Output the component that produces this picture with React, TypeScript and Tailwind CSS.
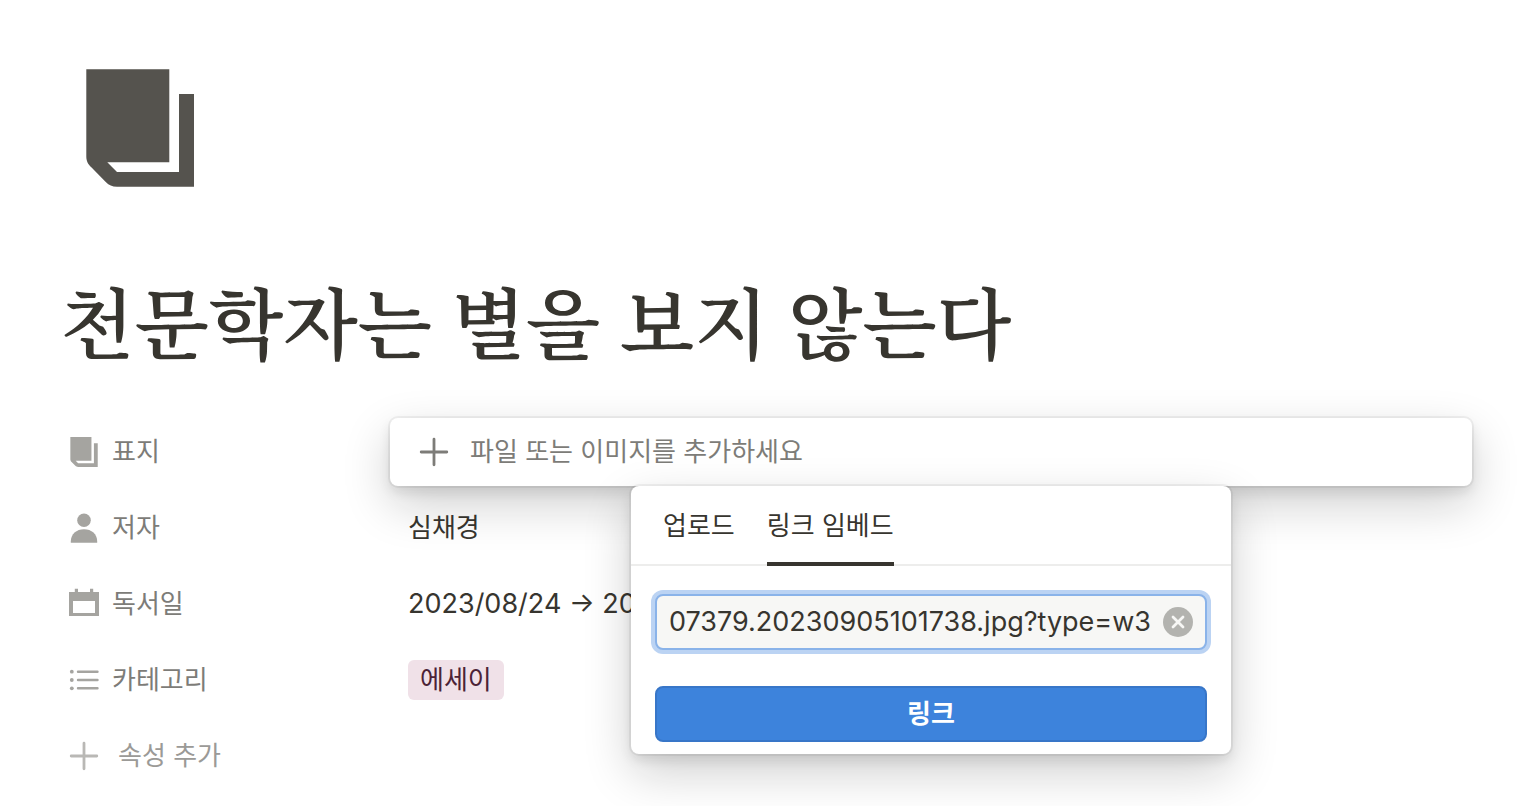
import { useState } from "react";
import type { ReactNode } from "react";

type IconProps = { className?: string };

const BookIcon = ({ className }: IconProps) => (
    <svg viewBox="18 13 108 118" fill="currentColor" className={className} aria-hidden="true">
        <path d="M18.300 13.300H101.300V106.300H39.300L49 116H111V38H126V130.700H49C44 130.700 41 129.300 38 126.300L23.300 111.300C20.300 108.300 18.300 105.500 18.300 100.500Z" />
    </svg>
);

const PersonIcon = ({ className }: IconProps) => (
    <svg viewBox="0 0 32 32" fill="currentColor" className={className} aria-hidden="true">
        <circle cx="16" cy="8.200" r="6.800" />
        <path d="M2.800 30.800V29.500C2.800 22 8.500 17.200 16 17.200S29.200 22 29.200 29.500V30.800Z" />
    </svg>
);

const CalendarIcon = ({ className }: IconProps) => (
    <svg viewBox="0 0 32 32" fill="currentColor" className={className} aria-hidden="true">
        <path d="M6.800 .8H10V4H22V.8H25.200V4H31V28H1V4H6.800ZM5 13V25H27V13Z" fillRule="evenodd" />
    </svg>
);

const ListIcon = ({ className }: IconProps) => (
    <svg viewBox="0 0 32 32" fill="currentColor" className={className} aria-hidden="true">
        <circle cx="3.800" cy="7.700" r="1.900" />
        <circle cx="3.800" cy="16" r="1.900" />
        <circle cx="3.800" cy="24.300" r="1.900" />
        <path d="M10 7.700H29.500M10 16H29.500M10 24.300H29.500" stroke="currentColor" strokeWidth="2.400" strokeLinecap="round" />
    </svg>
);

const PlusIcon = ({ className }: IconProps) => (
    <svg viewBox="0 0 32 32" fill="none" className={className} aria-hidden="true">
        <path d="M16 3.200V28.800M3.200 16H28.800" stroke="currentColor" strokeWidth="2.800" strokeLinecap="round" />
    </svg>
);

const ClearIcon = ({ className }: IconProps) => (
    <svg viewBox="0 0 30 30" className={className} aria-hidden="true">
        <circle cx="15" cy="15" r="15" fill="#b3b3af" />
        <path d="M10 10L20 20M20 10L10 20" stroke="#f7f7f5" strokeWidth="2.800" strokeLinecap="round" />
    </svg>
);

type PropertyProps = {
    icon: ReactNode;
    label: string;
    children: ReactNode;
};

function Property({ icon, label, children }: PropertyProps) {
    return (
        <div className="flex min-h-[68px]">
            <div className="flex w-[322px] shrink-0 items-center gap-3 text-[#7d7c78]">
                <span className="flex size-8 items-center justify-center text-[#a5a4a0]">{icon}</span>
                <span>{label}</span>
            </div>
            <div className="flex min-w-0 flex-1 items-center">{children}</div>
        </div>
    );
}

const tabs = [
    { id: "upload", label: "업로드" },
    { id: "embed", label: "링크 임베드" },
];

function FilePopover() {
    const [activeTab, setActiveTab] = useState("embed");
    const [url, setUrl] = useState("07379.20230905101738.jpg?type=w3");

    return (
        <div className="absolute top-full left-1/2 z-10 w-[600px] -translate-x-1/2 rounded-lg bg-white shadow-[0_0_0_2px_rgba(15,15,15,0.05),0_6px_12px_rgba(15,15,15,0.1),0_18px_48px_rgba(15,15,15,0.2)]">
            <div role="tablist" className="flex h-20 gap-8 border-b-2 border-[#ededec] px-8">
                {tabs.map((tab) => (
                    <button
                        key={tab.id}
                        type="button"
                        role="tab"
                        aria-selected={activeTab === tab.id}
                        onClick={() => setActiveTab(tab.id)}
                        className={`-mb-0.5 border-b-4 pt-1 ${
                            activeTab === tab.id ? "border-[#37352f]" : "border-transparent"
                        }`}
                    >
                        {tab.label}
                    </button>
                ))}
            </div>

            <form className="px-6 pt-7 pb-3" onSubmit={(e) => e.preventDefault()}>
                <div className="flex h-14 items-center gap-2 rounded-lg border-2 border-[#8ab3e9] bg-[#f7f7f5] px-3 ring-4 ring-[#bbd3f3]">
                    <input
                        type="text"
                        aria-label="이미지 링크"
                        value={url}
                        onChange={(e) => setUrl(e.target.value)}
                        className="min-w-0 flex-1 text-[27px] outline-none"
                    />
                    <button type="button" aria-label="지우기" onClick={() => setUrl("")}>
                        <ClearIcon className="size-[30px]" />
                    </button>
                </div>
                <button
                    type="submit"
                    className="mt-9 h-14 w-full rounded-lg border-2 border-[#3876c8] bg-[#3d83dc] font-bold text-white"
                >
                    링크
                </button>
            </form>
        </div>
    );
}

export default function App() {
    return (
        <main className="min-h-screen overflow-hidden bg-white px-[68px] pt-14 font-['Inter','Noto_Sans_CJK_KR',sans-serif] text-[26px] leading-9 text-[#37352f]">
            <div className="flex size-36 items-center justify-center text-[#55534e]">
                <BookIcon className="h-[118px] w-[108px]" />
            </div>

            <h1 className="-ml-2 mt-[72px] mb-[50px] font-['Noto_Serif_CJK_KR','Noto_Sans_CJK_KR',serif] text-[77px] leading-[96px] font-semibold">
                천문학자는 별을 보지 않는다
            </h1>

            {/* Properties */}
            <div className="flex flex-col gap-2">
                <Property icon={<BookIcon className="h-[30px] w-7" />} label="표지">
                    <div className="relative h-full w-full rounded-lg bg-white shadow-[0_0_0_2px_rgba(15,15,15,0.05),0_6px_12px_rgba(15,15,15,0.1),0_18px_48px_rgba(15,15,15,0.2)]">
                        <button type="button" className="flex h-full w-full items-center gap-5 px-7 text-[#7d7c78]">
                            <PlusIcon className="size-8" />
                            파일 또는 이미지를 추가하세요
                        </button>
                        <FilePopover />
                    </div>
                </Property>
                <Property icon={<PersonIcon className="size-8" />} label="저자">
                    <span className="px-[18px]">심채경</span>
                </Property>
                <Property icon={<CalendarIcon className="size-8" />} label="독서일">
                    <span className="px-[18px] text-[27px]">2023/08/24 → 2023/09/05</span>
                </Property>
                <Property icon={<ListIcon className="size-8" />} label="카테고리">
                    <span className="mx-[18px] flex h-10 items-center rounded-md bg-[#f0e1e8] px-3 text-[#4c2337]">에세이</span>
                </Property>
                <button type="button" className="flex h-[68px] items-center gap-[18px] self-start text-[#9b9a97]">
                    <PlusIcon className="size-8 text-[#b9b8b5]" />
                    속성 추가
                </button>
            </div>
        </main>
    );
}
